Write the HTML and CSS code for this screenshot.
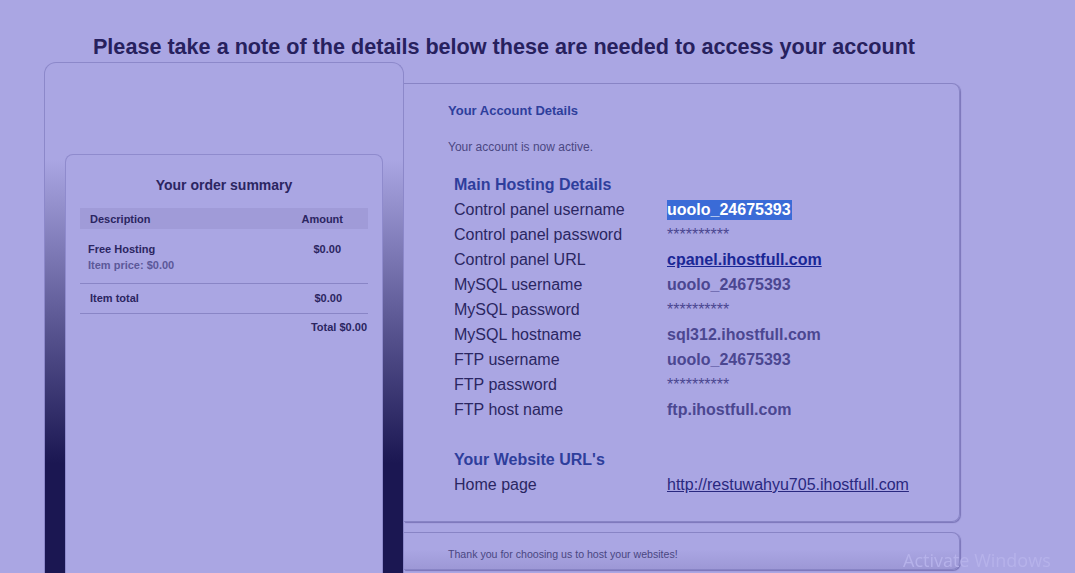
FILE: index.html
```html
<!DOCTYPE html>
<html>
<head>
<meta charset="utf-8">
<link rel="stylesheet" href="styles.css">
</head>
<body>
<div class="page">
  <h1 class="title">Please take a note of the details below these are needed to access your account</h1>
  <div class="layout">
    <aside class="sidebar">
      <div class="order-card">
        <h2 class="order-title">Your order summary</h2>
        <table class="order-table">
          <thead>
            <tr><th class="c-desc">Description</th><th class="c-amt">Amount</th></tr>
          </thead>
          <tbody>
            <tr class="item-row">
              <td class="c-desc">Free Hosting<div class="item-price">Item price: $0.00</div></td>
              <td class="c-amt">$0.00</td>
            </tr>
            <tr class="subtotal-row">
              <td class="c-desc">Item total</td>
              <td class="c-amt">$0.00</td>
            </tr>
            <tr class="total-row">
              <td colspan="2" class="c-total">Total $0.00</td>
            </tr>
          </tbody>
        </table>
      </div>
    </aside>
    <div class="content">
      <section class="panel">
        <h3 class="panel-title">Your Account Details</h3>
        <p class="status">Your account is now active.</p>
        <div class="details">
          <div class="sec-head">Main Hosting Details</div>
          <div class="lbl">Control panel username</div><div class="val"><span class="sel">uoolo_24675393</span></div>
          <div class="lbl">Control panel password</div><div class="val pw">**********</div>
          <div class="lbl">Control panel URL</div><div class="val"><a class="cp-link" href="#">cpanel.ihostfull.com</a></div>
          <div class="lbl">MySQL username</div><div class="val">uoolo_24675393</div>
          <div class="lbl">MySQL password</div><div class="val pw">**********</div>
          <div class="lbl">MySQL hostname</div><div class="val">sql312.ihostfull.com</div>
          <div class="lbl">FTP username</div><div class="val">uoolo_24675393</div>
          <div class="lbl">FTP password</div><div class="val pw">**********</div>
          <div class="lbl">FTP host name</div><div class="val">ftp.ihostfull.com</div>
          <div class="spacer"></div>
          <div class="sec-head">Your Website URL's</div>
          <div class="lbl">Home page</div><div class="val"><a class="home-link" href="#">http://restuwahyu705.ihostfull.com</a></div>
        </div>
      </section>
      <footer class="foot">Thank you for choosing us to host your websites!</footer>
    </div>
  </div>
</div>
<div class="watermark">Activate Windows</div>
</body>
</html>
```
FILE: styles.css
```css
html, body {
  margin: 0;
  padding: 0;
  background: #aaa6e3;
  font-family: "Liberation Sans", Arial, sans-serif;
  overflow: hidden;
  height: 573px;
}
.page {
  margin-left: 44px;
  width: 920px;
}
.title {
  margin: 0;
  padding-top: 34px;
  height: 28px;
  font-size: 21.6px;
  line-height: 25px;
  font-weight: bold;
  color: #27215e;
  text-align: center;
  white-space: nowrap;
}
.layout {
  display: flex;
  align-items: flex-start;
}
.sidebar {
  box-sizing: border-box;
  width: 360px;
  height: 511px;
  flex: none;
  border: 1px solid #8c88ca;
  border-bottom: none;
  border-radius: 12px 12px 0 0;
  background: linear-gradient(to bottom, #aaa6e3 96px, #5b5793 260px, #1b1752 400px);
  padding: 91px 20px 0;
}
.order-card {
  box-sizing: border-box;
  height: 419px;
  background: #aaa6e3;
  border: 1px solid #8f8bcd;
  border-bottom: none;
  border-radius: 8px 8px 0 0;
  padding: 22px 14px 0;
}
.order-title {
  margin: 0 0 14px;
  font-size: 14px;
  line-height: 17px;
  font-weight: bold;
  color: #2b2561;
  text-align: center;
}
.order-table {
  width: 100%;
  border-collapse: collapse;
  font-size: 11px;
  line-height: 16px;
  font-weight: bold;
  color: #2b2561;
}
.order-table th {
  background: #a09bd8;
  height: 21px;
  padding: 0;
  font-weight: bold;
}
.order-table td { padding: 0; vertical-align: top; }
.c-desc { text-align: left; padding-left: 8px !important; }
.c-amt { text-align: right; padding-right: 25px !important; }
.order-table th.c-desc { padding-left: 10px !important; }
.item-row td { padding-top: 12px !important; padding-bottom: 10px !important; border-bottom: 1px solid #8985c6; }
.item-row .c-amt { padding-right: 27px !important; }
.item-price { color: #5c5899; }
.subtotal-row td { padding-top: 6px !important; padding-bottom: 7px !important; border-bottom: 1px solid #8985c6; }
.subtotal-row .c-desc { padding-left: 10px !important; }
.subtotal-row .c-amt { padding-right: 26px !important; }
.c-total { text-align: right; padding-top: 5px !important; padding-right: 1px !important; }

.content {
  margin-top: 21px;
  width: 556px;
  flex: none;
}
.panel {
  box-sizing: border-box;
  height: 439px;
  border: 1px solid #8884c5;
  border-left: none;
  border-radius: 0 8px 8px 0;
  box-shadow: 1px 1px 1px #7a75b8;
  padding: 19px 0 0 44px;
}
.panel-title {
  margin: 0;
  font-size: 13px;
  line-height: 16px;
  font-weight: bold;
  color: #2e3e9c;
}
.status {
  margin: 21px 0 0;
  font-size: 12px;
  line-height: 14px;
  color: #4a4782;
}
.details {
  margin: 18px 0 0 6px;
  display: grid;
  grid-template-columns: 213px auto;
  grid-auto-rows: 25px;
  font-size: 16px;
  line-height: 25px;
}
.sec-head {
  grid-column: 1 / 3;
  font-weight: bold;
  color: #2e3e9c;
}
.spacer { grid-column: 1 / 3; }
.lbl { color: #2a2662; }
.val {
  font-weight: bold;
  color: #4b4791;
}
.val.pw {
  font-weight: normal;
  font-size: 16px;
}
.sel {
  background: #3a6bd7;
  color: #ffffff;
  padding: 1px 1px 2px 0;
}
.cp-link {
  color: #1a2796;
  text-decoration: underline;
}
.home-link {
  font-weight: normal;
  color: #29287f;
  text-decoration: underline;
}
.foot {
  box-sizing: border-box;
  margin-top: 10px;
  height: 38px;
  border: 1px solid #8884c5;
  border-left: none;
  border-radius: 0 8px 8px 0;
  box-shadow: 1px 1px 1px #7a75b8;
  background: linear-gradient(to bottom, #aaa6e3 45%, #9d98d6 100%);
  padding: 14px 0 0 44px;
  font-size: 10.6px;
  line-height: 14px;
  color: #4a4782;
}
.watermark {
  position: fixed;
  left: 903px;
  top: 549px;
  font-family: "Open Sans", sans-serif;
  font-size: 18px;
  line-height: 22px;
  color: #b6b2ea;
  white-space: nowrap;
}
```
